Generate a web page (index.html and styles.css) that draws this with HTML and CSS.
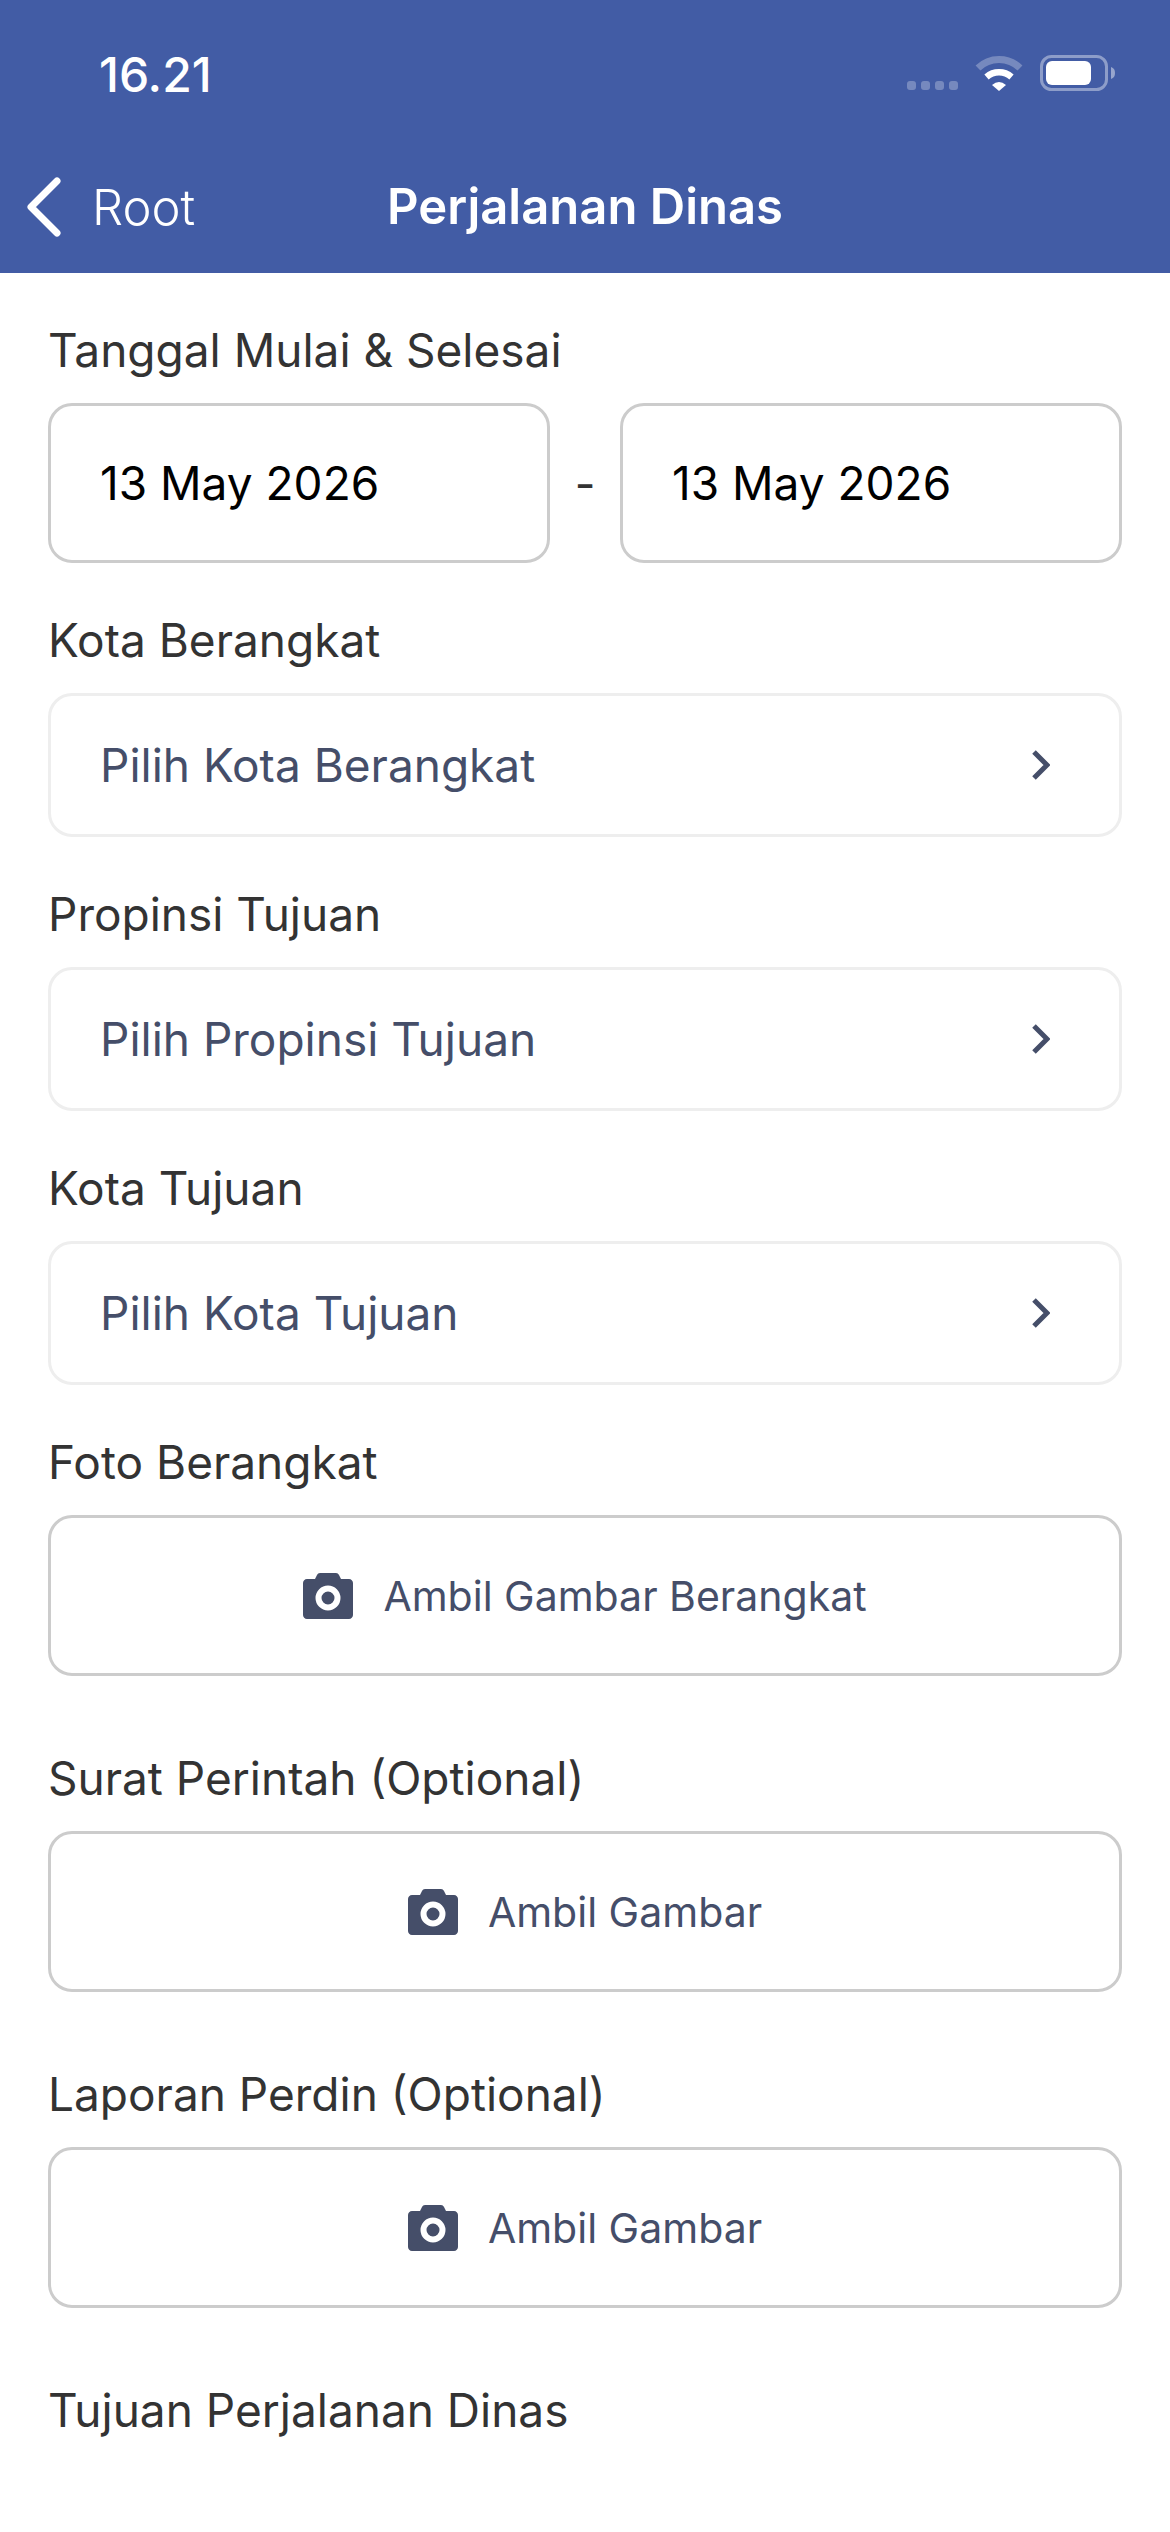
FILE: index.html
```html
<!DOCTYPE html>
<html lang="id">
<head>
<meta charset="utf-8">
<title>Perjalanan Dinas</title>
<link rel="stylesheet" href="styles.css">
</head>
<body>
<header class="topbar">
  <div class="status">
    <span class="time">16.21</span>
    <div class="status-icons">
      <div class="signal"><i></i><i></i><i></i><i></i></div>
      <svg class="wifi" width="48" height="36" viewBox="0 0 48 36"><path d="M3 13A30 30 0 0 1 45 13" fill="none" stroke="#fff" stroke-opacity=".28" stroke-width="7"/><path d="M11.5 22A19 19 0 0 1 36.5 22" fill="none" stroke="#fff" stroke-width="6.5"/><path d="M17 30Q24 24 31 30L24 36z" fill="#fff"/></svg>
      <svg class="battery" width="75" height="36" viewBox="0 0 75 36"><rect x="1.5" y="1.5" width="65" height="33" rx="10" fill="none" stroke="#fff" stroke-opacity=".4" stroke-width="3"/><rect x="6" y="6" width="45" height="24" rx="6" fill="#fff"/><path d="M71 12c3 1 4 3 4 6s-1 5-4 6z" fill="#fff" fill-opacity=".45"/></svg>
    </div>
  </div>
  <nav class="navbar">
    <div class="back">
      <svg width="36" height="60" viewBox="0 0 36 60"><path d="M30 4 4 30l26 26" fill="none" stroke="#fff" stroke-width="7" stroke-linecap="round" stroke-linejoin="round"/></svg>
      <span>Root</span>
    </div>
    <h1>Perjalanan Dinas</h1>
  </nav>
</header>
<main class="form">
  <section class="field">
    <label>Tanggal Mulai &amp; Selesai</label>
    <div class="dates">
      <div class="date">13 May 2026</div>
      <span class="dash">-</span>
      <div class="date">13 May 2026</div>
    </div>
  </section>
  <section class="field">
    <label>Kota Berangkat</label>
    <div class="select"><span>Pilih Kota Berangkat</span><svg class="chev" width="18" height="30" viewBox="0 0 18 30"><path d="M2 2l13 13L2 28" fill="none" stroke="#454e69" stroke-width="5"/></svg></div>
  </section>
  <section class="field">
    <label>Propinsi Tujuan</label>
    <div class="select"><span>Pilih Propinsi Tujuan</span><svg class="chev" width="18" height="30" viewBox="0 0 18 30"><path d="M2 2l13 13L2 28" fill="none" stroke="#454e69" stroke-width="5"/></svg></div>
  </section>
  <section class="field">
    <label>Kota Tujuan</label>
    <div class="select"><span>Pilih Kota Tujuan</span><svg class="chev" width="18" height="30" viewBox="0 0 18 30"><path d="M2 2l13 13L2 28" fill="none" stroke="#454e69" stroke-width="5"/></svg></div>
  </section>
  <section class="field">
    <label>Foto Berangkat</label>
    <div class="upload"><svg class="cam" width="50" height="46" viewBox="0 0 50 46"><path fill-rule="evenodd" fill="#454e69" d="M4 6h8l2-4c.6-1.200 1.600-2 3-2h16c1.400 0 2.400.8 3 2l2 4h8c2.200 0 4 1.800 4 4v32c0 2.200-1.800 4-4 4H4c-2.200 0-4-1.800-4-4V10c0-2.200 1.800-4 4-4zm21 31.500a12.500 12.500 0 1 0 0-25 12.500 12.500 0 0 0 0 25zm0-6a6.500 6.500 0 1 1 0-13 6.500 6.500 0 0 1 0 13z"/></svg><span>Ambil Gambar Berangkat</span></div>
  </section>
  <section class="field wide">
    <label>Surat Perintah (Optional)</label>
    <div class="upload"><svg class="cam" width="50" height="46" viewBox="0 0 50 46"><path fill-rule="evenodd" fill="#454e69" d="M4 6h8l2-4c.6-1.200 1.600-2 3-2h16c1.400 0 2.400.8 3 2l2 4h8c2.200 0 4 1.800 4 4v32c0 2.200-1.800 4-4 4H4c-2.200 0-4-1.800-4-4V10c0-2.200 1.800-4 4-4zm21 31.500a12.500 12.500 0 1 0 0-25 12.500 12.500 0 0 0 0 25zm0-6a6.500 6.500 0 1 1 0-13 6.500 6.500 0 0 1 0 13z"/></svg><span>Ambil Gambar</span></div>
  </section>
  <section class="field wide">
    <label>Laporan Perdin (Optional)</label>
    <div class="upload"><svg class="cam" width="50" height="46" viewBox="0 0 50 46"><path fill-rule="evenodd" fill="#454e69" d="M4 6h8l2-4c.6-1.200 1.600-2 3-2h16c1.400 0 2.400.8 3 2l2 4h8c2.200 0 4 1.800 4 4v32c0 2.200-1.800 4-4 4H4c-2.200 0-4-1.800-4-4V10c0-2.200 1.800-4 4-4zm21 31.500a12.500 12.500 0 1 0 0-25 12.500 12.500 0 0 0 0 25zm0-6a6.500 6.500 0 1 1 0-13 6.500 6.500 0 0 1 0 13z"/></svg><span>Ambil Gambar</span></div>
  </section>
  <section class="field wide">
    <label>Tujuan Perjalanan Dinas</label>
  </section>
</main>
</body>
</html>
```
FILE: styles.css
```css
* { box-sizing: border-box; }
html, body { margin: 0; padding: 0; }
body { width: 1170px; height: 2532px; overflow: hidden; background: #fff; font-family: Inter, "Liberation Sans", sans-serif; color: #333; }
.topbar { background: #425ca5; height: 273px; color: #fff; display: flex; flex-direction: column; }
.status { height: 179px; display: flex; justify-content: space-between; align-items: flex-start; padding: 50px 55px 0 99px; }
.time { font-size: 48px; line-height: 50px; font-weight: 500; }
.status-icons { display: flex; align-items: flex-end; gap: 17px; margin-top: 5px; }
.signal { display: flex; gap: 5px; margin-bottom: 1px; }
.signal i { width: 9px; height: 9px; border-radius: 3px; background: rgba(255,255,255,.28); }
.navbar { height: 94px; position: relative; display: flex; align-items: flex-start; justify-content: center; }
.navbar h1 { margin: 0; font-size: 49px; line-height: 56px; font-weight: 600; }
.back { position: absolute; left: 27px; top: -2px; height: 60px; display: flex; align-items: center; gap: 29px; font-size: 49px; font-weight: 300; }
.form { padding: 50px 48px 0; display: flex; flex-direction: column; gap: 50px; }
.field { display: flex; flex-direction: column; }
.field.wide { margin-top: 25px; }
label { font-size: 46px; line-height: 54px; color: #333; margin-bottom: 26px; font-weight: 400; }
.dates { display: flex; align-items: center; justify-content: space-between; }
.date { width: 502px; height: 160px; border: 3px solid #ccc; border-radius: 24px; display: flex; align-items: center; padding-left: 49px; font-size: 46px; color: #000; }
.dash { font-size: 45px; }
.select { height: 144px; border: 3px solid #eee; border-radius: 24px; display: flex; align-items: center; justify-content: space-between; padding: 0 69px 0 49px; font-size: 46px; color: #454e69; }
.upload { height: 161px; border: 3px solid #ccc; border-radius: 24px; display: flex; align-items: center; justify-content: center; gap: 30px; font-size: 41px; color: #454e69; }
```
